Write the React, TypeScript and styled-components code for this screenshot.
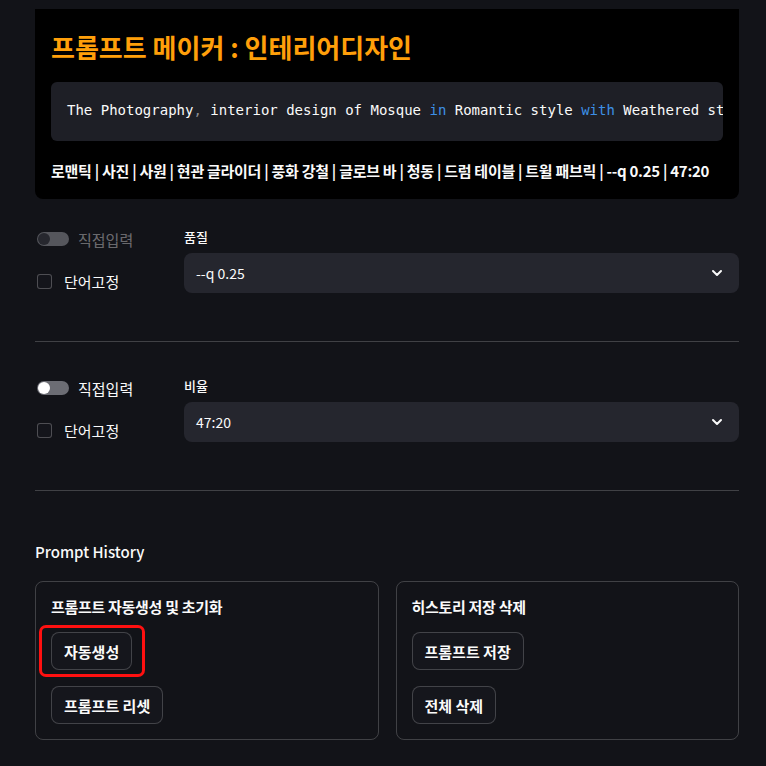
import * as React from "react";
import styled, { createGlobalStyle } from "styled-components";

const GlobalStyle = createGlobalStyle`
  body {
    margin: 0;
    background: #121318;
    color: #fafafa;
    font-family: "Noto Sans CJK KR", "Noto Sans", sans-serif;
  }
`;

const Page = styled.div`
  width: 704px;
  margin-left: 35px;
  padding-top: 9px;
  padding-bottom: 26px;
`;

const Hero = styled.div`
  background: #000;
  border-radius: 0 0 8px 8px;
  padding: 16px;
`;

const Title = styled.h1`
  margin: 0 0 13px;
  color: #ff9f0a;
  font-size: 26px;
  line-height: 44px;
  font-weight: 700;
`;

const CodeBlock = styled.pre`
  margin: 0;
  background: #1e1f26;
  border-radius: 6px;
  padding: 18px 16px 21px;
  font-family: "DejaVu Sans Mono", "Liberation Mono", monospace;
  font-size: 14px;
  line-height: 20px;
  color: #fafafa;
  white-space: pre;
  overflow: hidden;
`;

const Tok = styled.span<{ $kind: "kw" | "punct" }>`
  color: ${(p) => (p.$kind === "kw" ? "#3d8fe6" : "#8a8c93")};
`;

const Tags = styled.div`
  margin-top: 18px;
  font-size: 15px;
  line-height: 24px;
  font-weight: 600;
  letter-spacing: -0.28px;
  white-space: nowrap;
`;

const Section = styled.div<{ $top: number }>`
  margin-top: ${(p) => p.$top}px;
  display: grid;
  grid-template-columns: 133px 1fr;
  column-gap: 16px;
`;

const LeftCol = styled.div`
  display: flex;
  flex-direction: column;
  gap: 20px;
  padding-left: 2px;
  padding-top: 1px;
`;

const ToggleRow = styled.label<{ $disabled?: boolean }>`
  display: flex;
  align-items: center;
  gap: 9px;
  height: 22px;
  font-size: 15px;
  color: ${(p) => (p.$disabled ? "rgba(250,250,250,0.4)" : "#fafafa")};
`;

const Track = styled.span<{ $disabled?: boolean }>`
  position: relative;
  width: 32px;
  height: 14px;
  border-radius: 7px;
  background: ${(p) => (p.$disabled ? "#55565c" : "#6c6d74")};
  flex: none;
`;

const Knob = styled.span<{ $disabled?: boolean }>`
  position: absolute;
  left: 1px;
  top: 1px;
  width: 12px;
  height: 12px;
  border-radius: 50%;
  background: ${(p) => (p.$disabled ? "#26272e" : "#ffffff")};
`;

const CheckRow = styled.label`
  display: flex;
  align-items: center;
  gap: 12px;
  height: 22px;
  font-size: 15px;
  color: #fafafa;
`;

const Box = styled.span`
  width: 13px;
  height: 13px;
  border: 1px solid rgba(250, 250, 250, 0.25);
  border-radius: 3px;
  background: #14151b;
  flex: none;
`;

const Field = styled.div`
  display: flex;
  flex-direction: column;
  gap: 6px;
`;

const FieldLabel = styled.div`
  font-size: 13px;
  line-height: 20px;
  font-weight: 500;
  color: #fafafa;
`;

const Select = styled.div`
  height: 40px;
  background: #25262e;
  border-radius: 8px;
  display: flex;
  align-items: center;
  justify-content: space-between;
  padding: 0 14px 0 12px;
  font-size: 14px;
  color: #fafafa;
`;

const Divider = styled.hr<{ $top: number }>`
  margin: ${(p) => p.$top}px 0 0;
  border: none;
  height: 1px;
  background: rgba(250, 250, 250, 0.2);
`;

const Heading = styled.div`
  margin-top: 49px;
  font-size: 15px;
  line-height: 24px;
  font-weight: 500;
`;

const Cards = styled.div`
  margin-top: 17px;
  display: grid;
  grid-template-columns: 1fr 1fr;
  gap: 17px;
`;

const Card = styled.div`
  border: 1px solid rgba(250, 250, 250, 0.2);
  border-radius: 8px;
  padding: 15px;
  display: flex;
  flex-direction: column;
  align-items: flex-start;
  gap: 16px;
`;

const CardTitle = styled.div`
  font-size: 15px;
  line-height: 20px;
  font-weight: 700;
  letter-spacing: -0.3px;
  margin-bottom: -1px;
`;

const Button = styled.button`
  position: relative;
  height: 38px;
  padding: 0 12px;
  border: 1px solid rgba(250, 250, 250, 0.2);
  border-radius: 8px;
  background: #15161c;
  color: #fafafa;
  font-family: inherit;
  font-size: 15px;
  font-weight: 600;
`;

const Highlight = styled.span`
  position: absolute;
  top: -8px;
  right: -14px;
  bottom: -8px;
  left: -13px;
  border: 3px solid #ff1010;
  border-radius: 7px;
  pointer-events: none;
`;

const Chevron = () => (
  <svg width="16" height="16" viewBox="0 0 16 16" fill="none">
    <path d="M4 6l4 4 4-4" stroke="#fafafa" strokeWidth="2" strokeLinecap="round" strokeLinejoin="round" />
  </svg>
);

const Toggle: React.FC<{ disabled?: boolean }> = ({ disabled }) => (
  <ToggleRow $disabled={disabled}>
    <Track $disabled={disabled}>
      <Knob $disabled={disabled} />
    </Track>
    직접입력
  </ToggleRow>
);

const OptionRow: React.FC<{ top: number; label: string; value: string; disabled?: boolean }> = ({
  top,
  label,
  value,
  disabled,
}) => (
  <Section $top={top}>
    <LeftCol>
      <Toggle disabled={disabled} />
      <CheckRow>
        <Box />
        단어고정
      </CheckRow>
    </LeftCol>
    <Field>
      <FieldLabel>{label}</FieldLabel>
      <Select>
        <span>{value}</span>
        <Chevron />
      </Select>
    </Field>
  </Section>
);

export default function App() {
  return (
    <Page>
      <GlobalStyle />
      <Hero>
        <Title>프롬프트 메이커 : 인테리어디자인</Title>
        <CodeBlock>
          The Photography<Tok $kind="punct">,</Tok> interior design of Mosque <Tok $kind="kw">in</Tok> Romantic
          style <Tok $kind="kw">with</Tok> Weathered st
        </CodeBlock>
        <Tags>
          로맨틱 | 사진 | 사원 | 현관 글라이더 | 풍화 강철 | 글로브 바 | 청동 | 드럼 테이블 | 트윌 패브릭 | --q 0.25 | 47:20
        </Tags>
      </Hero>

      <OptionRow top={28} label="품질" value="--q 0.25" disabled />
      <Divider $top={48} />
      <OptionRow top={34} label="비율" value="47:20" />
      <Divider $top={48} />

      <Heading>Prompt History</Heading>
      <Cards>
        <Card>
          <CardTitle>프롬프트 자동생성 및 초기화</CardTitle>
          <Button>
            자동생성
            <Highlight />
          </Button>
          <Button>프롬프트 리셋</Button>
        </Card>
        <Card>
          <CardTitle>히스토리 저장 삭제</CardTitle>
          <Button>프롬프트 저장</Button>
          <Button>전체 삭제</Button>
        </Card>
      </Cards>
    </Page>
  );
}
